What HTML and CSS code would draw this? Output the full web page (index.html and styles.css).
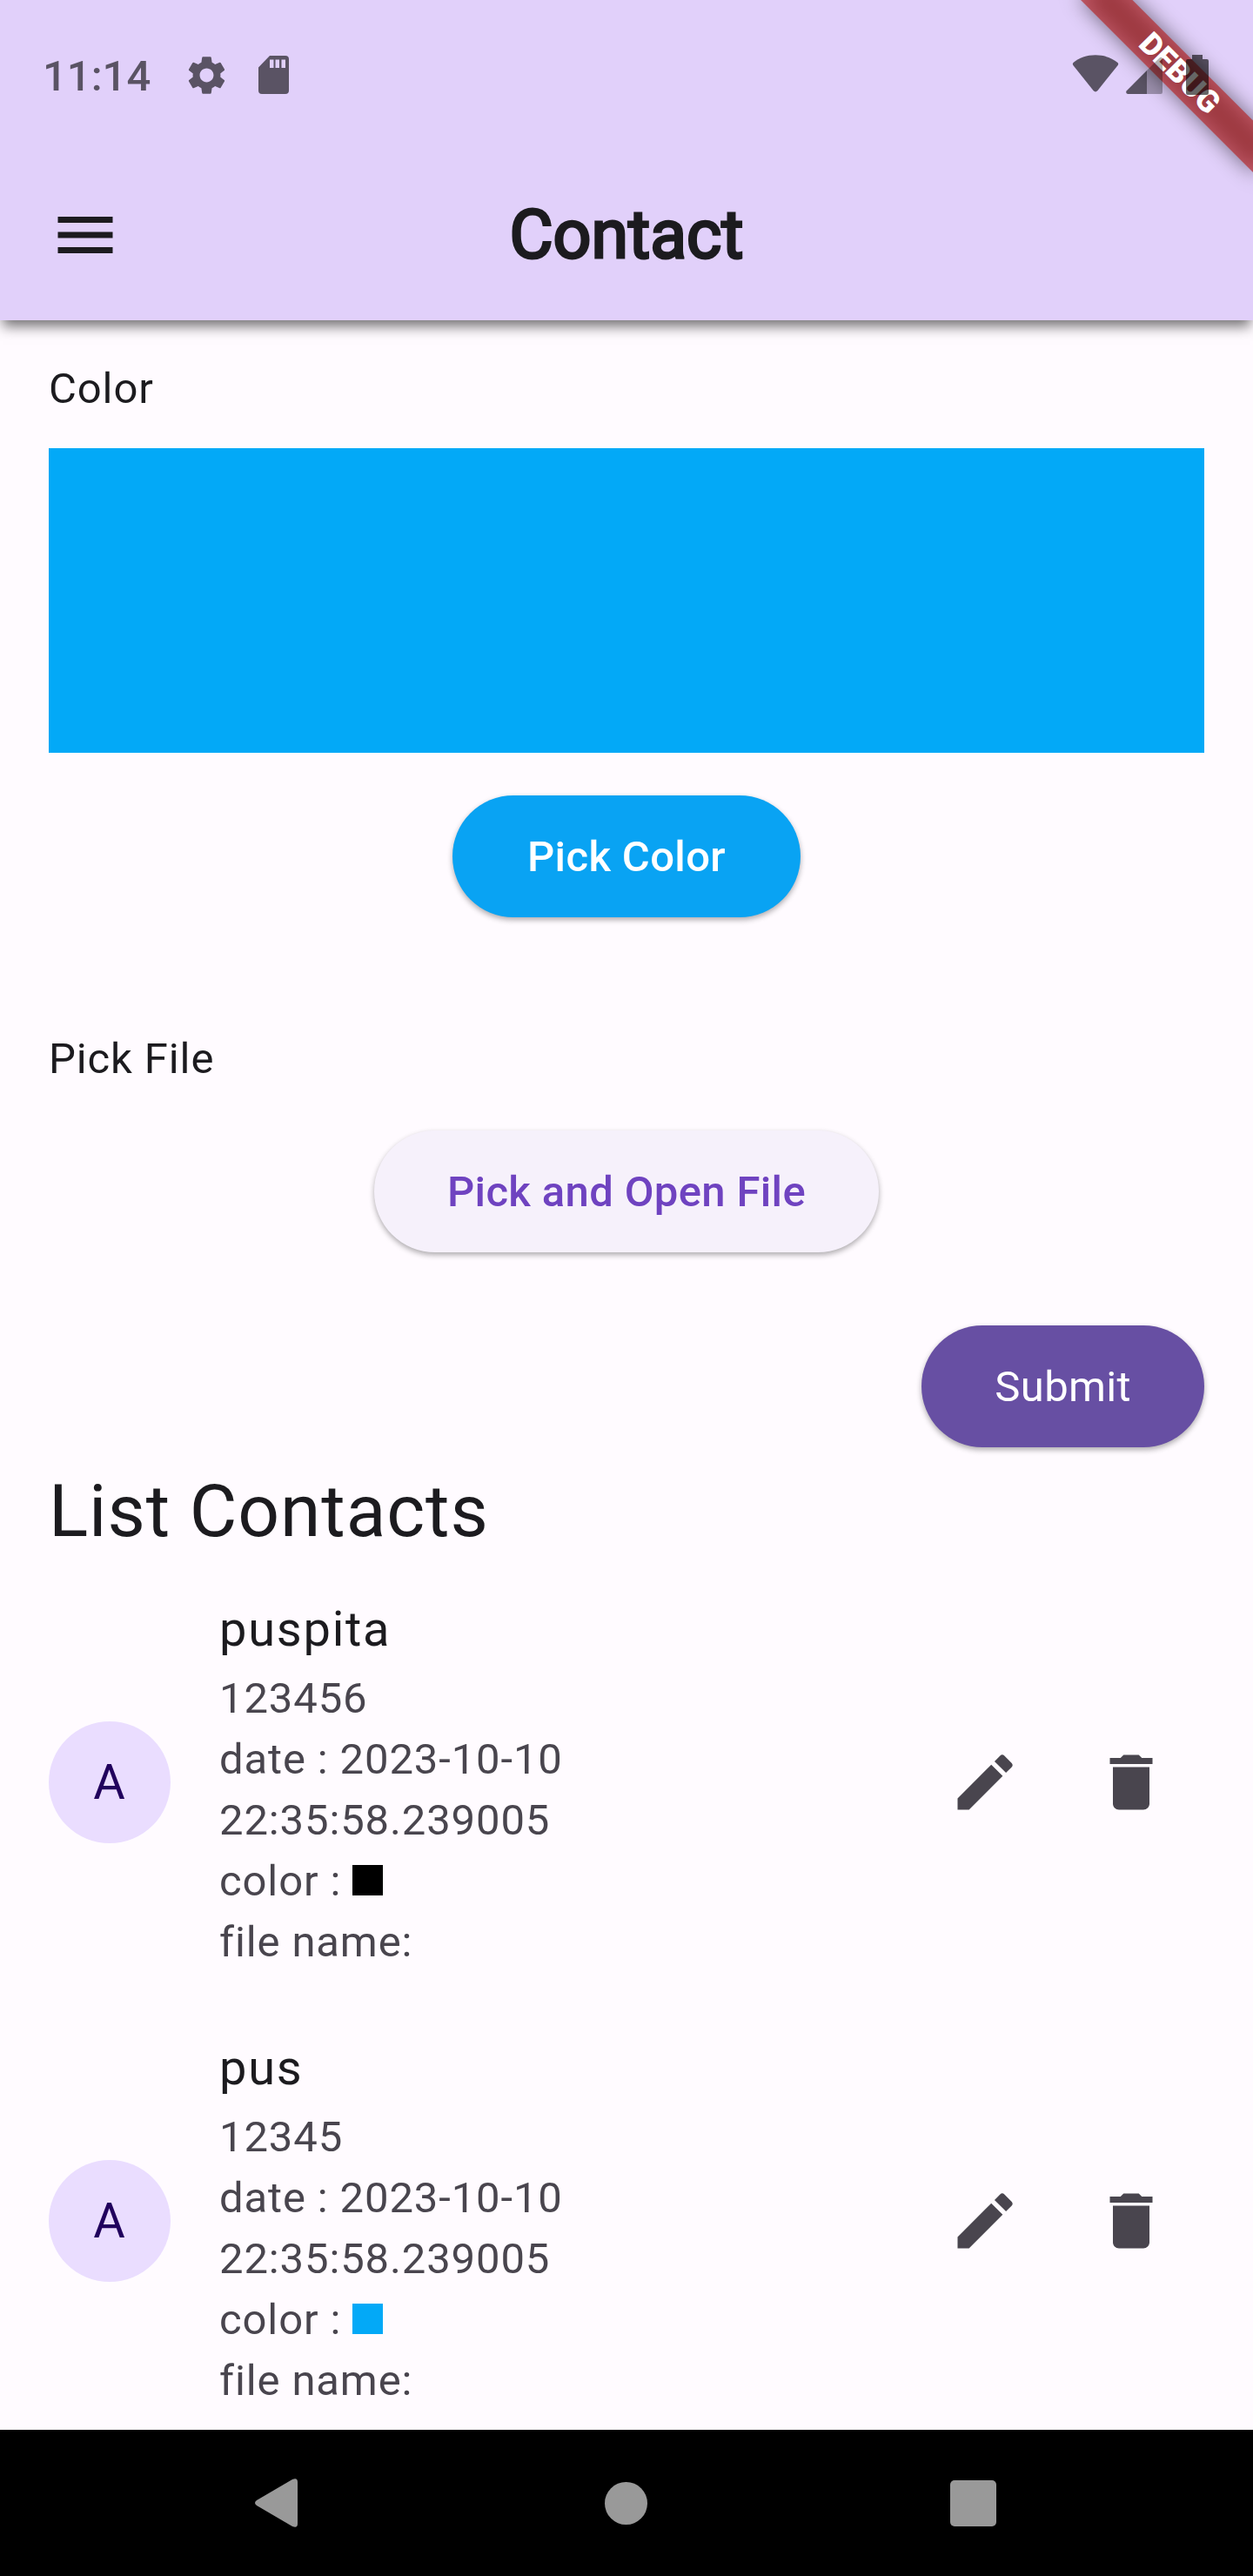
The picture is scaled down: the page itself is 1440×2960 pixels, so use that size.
FILE: index.html
```html
<!DOCTYPE html>
<html lang="en">
<head>
<meta charset="utf-8">
<title>Contact</title>
<link rel="stylesheet" href="styles.css">
</head>
<body>
<div class="screen">
  <header class="top">
    <div class="status">
      <span class="clock">11:14</span>
      <svg class="gear" viewBox="0 0 24 24"><path d="M19.14 12.94c.04-.3.06-.61.06-.94 0-.32-.02-.64-.07-.94l2.03-1.58c.18-.14.23-.41.12-.61l-1.92-3.32c-.12-.22-.37-.29-.59-.22l-2.39.96c-.5-.38-1.03-.7-1.62-.94l-.36-2.54c-.04-.24-.24-.41-.48-.41h-3.84c-.24 0-.43.17-.47.41l-.36 2.54c-.59.24-1.13.57-1.62.94l-2.39-.96c-.22-.08-.47 0-.59.22L2.74 8.87c-.12.21-.08.47.12.61l2.03 1.58c-.05.3-.09.63-.09.94s.02.64.07.94l-2.03 1.58c-.18.14-.23.41-.12.61l1.92 3.32c.12.22.37.29.59.22l2.39-.96c.5.38 1.03.7 1.62.94l.36 2.54c.05.24.24.41.48.41h3.84c.24 0 .44-.17.47-.41l.36-2.54c.59-.24 1.13-.56 1.62-.94l2.39.96c.22.08.47 0 .59-.22l1.92-3.32c.12-.22.07-.47-.12-.61l-2.01-1.58zM12 15.6c-1.98 0-3.6-1.62-3.6-3.6s1.62-3.6 3.6-3.6 3.6 1.62 3.6 3.6-1.62 3.6-3.6 3.6z"/></svg>
      <svg class="sd" viewBox="0 0 35 44"><path fill-rule="evenodd" d="M13 0H31a4 4 0 0 1 4 4V40a4 4 0 0 1-4 4H4a4 4 0 0 1-4-4V13.500zM13 4.500V14h4.500V4.500zM19.500 4.500V14H24V4.500zM26.500 4.500V14H31V4.500z"/></svg>
      <div class="system">
        <svg class="wifi" viewBox="0 0 54 43"><path d="M1.500 9C8 3.500 17 .3 27 .3S46 3.500 52.500 9q1.300 1.300.2 2.900L29.300 41.300q-2.300 2.300-4.600 0L1.300 11.900Q.2 10.300 1.500 9z"/></svg>
        <svg class="signal" viewBox="0 0 42 43"><path d="M24 16v27H2Q-1 42 .8 39.200z"/><path class="dim" d="M24 16 38.500 1.500Q41.500-.5 42 3v38q0 2-2 2H24z"/></svg>
        <svg class="battery" viewBox="0 0 26 46"><path d="M7 0h12v5h5q2 0 2 2v37q0 2-2 2H2q-2 0-2-2V7q0-2 2-2h5z"/></svg>
      </div>
    </div>
    <div class="bar">
      <svg class="menu" viewBox="0 0 24 24"><path d="M3 18h18v-2H3v2zm0-5h18v-2H3v2zm0-7v2h18V6H3z"/></svg>
      <h1>Contact</h1>
    </div>
    <div class="banner"><span>DEBUG</span></div>
  </header>

  <main>
    <p class="label">Color</p>
    <div class="swatch"></div>
    <button class="btn pick-color">Pick Color</button>
    <p class="label file-label">Pick File</p>
    <button class="btn pick-file">Pick and Open File</button>
    <button class="btn submit">Submit</button>
    <h2>List Contacts</h2>
    <ul>
      <li>
        <span class="avatar">A</span>
        <div class="info">
          <h3>puspita</h3>
          <p>123456</p>
          <p>date : 2023-10-10</p>
          <p>22:35:58.239005</p>
          <p>color : <i class="chip black"></i></p>
          <p>file name:</p>
        </div>
        <div class="actions">
          <svg viewBox="0 0 24 24"><path d="M3 17.250V21h3.750L17.810 9.940l-3.750-3.750L3 17.250zM20.710 7.040a1 1 0 0 0 0-1.410l-2.340-2.340a1 1 0 0 0-1.410 0l-1.830 1.830 3.750 3.750 1.830-1.830z"/></svg>
          <svg viewBox="0 0 24 24"><path d="M6 19c0 1.100.9 2 2 2h8c1.100 0 2-.9 2-2V7H6v12zM19 4h-3.500l-1-1h-5l-1 1H5v2h14V4z"/></svg>
        </div>
      </li>
      <li>
        <span class="avatar">A</span>
        <div class="info">
          <h3>pus</h3>
          <p>12345</p>
          <p>date : 2023-10-10</p>
          <p>22:35:58.239005</p>
          <p>color : <i class="chip blue"></i></p>
          <p>file name:</p>
        </div>
        <div class="actions">
          <svg viewBox="0 0 24 24"><path d="M3 17.250V21h3.750L17.810 9.940l-3.750-3.750L3 17.250zM20.710 7.040a1 1 0 0 0 0-1.410l-2.340-2.340a1 1 0 0 0-1.410 0l-1.830 1.830 3.750 3.750 1.830-1.830z"/></svg>
          <svg viewBox="0 0 24 24"><path d="M6 19c0 1.100.9 2 2 2h8c1.100 0 2-.9 2-2V7H6v12zM19 4h-3.500l-1-1h-5l-1 1H5v2h14V4z"/></svg>
        </div>
      </li>
    </ul>
  </main>

  <nav>
    <svg class="back" viewBox="0 0 49 56"><path d="M2 25 43 1Q49-1.500 49 4V52Q49 57.500 43 55L2 31Q-2 28 2 25z"/></svg>
    <span class="home"></span>
    <span class="recent"></span>
  </nav>
</div>
</body>
</html>
```
FILE: styles.css
```css
* { box-sizing: border-box; margin: 0; padding: 0; }

body {
  background: #fffbff;
  color: #1c1b1f;
  font-family: Roboto, "Liberation Sans", sans-serif;
  font-size: 49px;
  line-height: 70px;
  letter-spacing: 0.875px;
}

.screen {
  width: 1440px;
  height: 2960px;
  display: flex;
  flex-direction: column;
  overflow: hidden;
}

.top {
  position: relative;
  z-index: 1;
  height: 368px;
  flex: none;
  background: #e1d0fa;
  box-shadow: 0 10px 14px -3px rgba(0, 0, 0, 0.55);
}

.status {
  position: relative;
  z-index: 2;
  height: 172px;
  display: flex;
  align-items: center;
  padding: 0 51px 0 49px;
  fill: rgba(0, 0, 0, 0.6);
}

.clock {
  width: 162px;
  font-weight: 500;
  letter-spacing: 0;
  color: rgba(0, 0, 0, 0.6);
  white-space: nowrap;
  padding-top: 3px;
}

.gear { width: 53px; height: 55px; }
.sd { width: 35px; height: 44px; margin-left: 33px; }

.system { display: flex; align-items: flex-end; margin-left: auto; }
.wifi { width: 54px; height: 43px; margin-bottom: 3px; }
.signal { width: 42px; height: 43px; margin-left: 8px; margin-bottom: 1px; }
.dim { fill: rgba(0, 0, 0, 0.3); }
.battery { width: 26px; height: 46px; margin-left: 27px; }

.bar {
  height: 196px;
  display: grid;
  grid-template-columns: 196px 1fr 196px;
  align-items: center;
}

.menu { width: 84px; height: 84px; justify-self: center; fill: #1c1b1f; }

h1 {
  font-size: 77px;
  line-height: 98px;
  font-weight: 400;
  letter-spacing: 0;
  text-align: center;
  -webkit-text-stroke: 3px #1c1b1f;
}

/* corner ribbon, laid over the header */
.banner {
  position: absolute;
  inset: 0;
  overflow: hidden;
}

.banner::before,
.banner span {
  content: "";
  position: absolute;
  left: 1300px;
  top: 98px;
  width: 280px;
  height: 42px;
  transform-origin: 140px -98px;
  transform: rotate(45deg);
}

.banner::before {
  background: rgba(0, 0, 0, 0.5);
  filter: blur(12px);
}

.banner span {
  background: rgba(183, 28, 28, 0.627);
  color: #fff;
  font-size: 35.7px;
  font-weight: 900;
  line-height: 42px;
  letter-spacing: 0;
  text-align: center;
}

main {
  flex: 1;
  min-height: 0;
  overflow: hidden;
  padding: 44px 56px 0;
  display: flex;
  flex-direction: column;
}

.swatch { height: 350px; margin-top: 33px; background: #03a9f7; flex: none; }

.btn {
  align-self: center;
  flex: none;
  height: 140px;
  padding: 2px 84px 0;
  border: 0;
  border-radius: 70px;
  font: 500 49px/70px Roboto, "Liberation Sans", sans-serif;
  letter-spacing: 0.35px;
  box-shadow: 0 3px 6px rgba(0, 0, 0, 0.32);
}

.pick-color { width: 400px; padding: 2px 0 0; margin-top: 49px; background: #09a3f3; color: #fff; }
.file-label { margin-top: 128px; }
.pick-file { margin-top: 47px; background: #f6f1fb; color: #6f43c0; }
.submit { margin-top: 84px; align-self: flex-end; background: #674fa3; color: #fff; font-weight: 400; }

h2 { margin-top: 14px; font-size: 84px; line-height: 120px; font-weight: 400; }

ul { list-style: none; margin-top: -1px; }

li {
  height: 504px;
  display: flex;
  align-items: center;
}

.avatar {
  width: 140px;
  height: 140px;
  border-radius: 50%;
  background: #eaddff;
  color: #21005d;
  font-size: 56px;
  line-height: 140px;
  text-align: center;
}

.info { flex: 1; margin-left: 56px; color: #49454e; }
.info h3 { font-size: 56px; line-height: 84px; margin-bottom: 3px; font-weight: 400; letter-spacing: 1.75px; color: #1c1b1f; }

.chip { display: inline-block; width: 35px; height: 35px; }
.black { background: #000; }
.blue { background: #03a9f7; }

.actions { display: flex; fill: #49454e; }
.actions svg { width: 168px; height: 84px; }

nav {
  flex: none;
  height: 168px;
  background: #000;
  display: flex;
  align-items: center;
  justify-content: space-between;
  padding: 0 295px 0 293px;
}

.back { width: 49px; height: 56px; fill: #999; }
.home { width: 49px; height: 49px; margin-left: 5px; border-radius: 50%; background: #999; }
.recent { width: 53px; height: 53px; border-radius: 5px; background: #999; }
```
